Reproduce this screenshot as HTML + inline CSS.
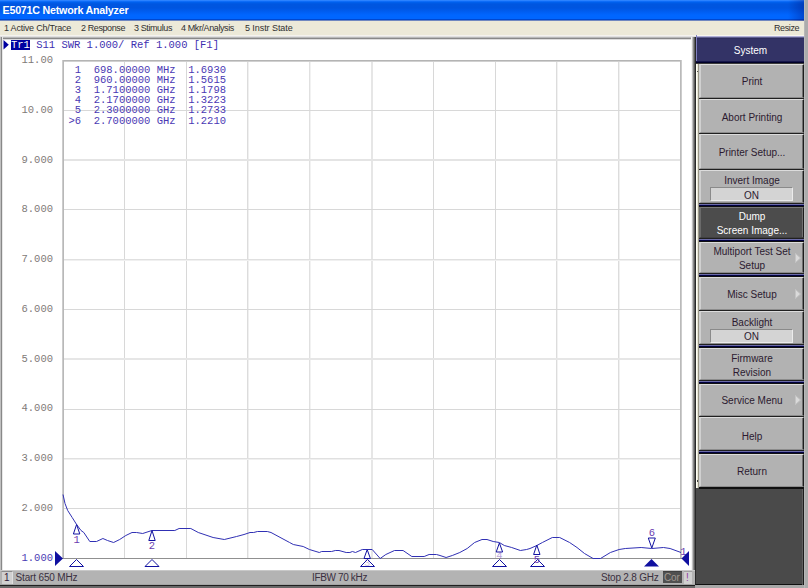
<!DOCTYPE html>
<html><head><meta charset="utf-8"><style>
*{margin:0;padding:0;box-sizing:border-box}
html,body{width:808px;height:588px;overflow:hidden;background:#a8a8a8;font-family:"Liberation Sans",sans-serif}
.abs{position:absolute}
#title{position:absolute;left:0;top:0;width:804px;height:21px;
 background:linear-gradient(to bottom,#3d8fff 0px,#1a75ff 1px,#0062f0 2px,#0056e0 4px,#0055e0 8px,#005cee 11px,#0066ff 15px,#0066ff 18.5px,#0048d0 19.5px,#7088c0 20.5px,#7088c0 21px)}
#title span{position:absolute;left:2.5px;top:4px;color:#fff;font-weight:bold;font-size:10.7px;letter-spacing:-0.22px}
#menu{position:absolute;left:0;top:21px;width:805px;height:14px;background:#ece9d8}
#menu span{position:absolute;top:2px;font-size:9px;color:#303030;letter-spacing:-0.4px;white-space:pre}
#strip{position:absolute;left:0;top:35px;width:696px;height:2px;background:linear-gradient(to bottom,#f5f3ee 0,#f5f3ee 1px,#e0e0e0 1px)}
#plotwin{position:absolute;left:0;top:37px;width:695px;height:533px;background:#fff}
#pwtop{position:absolute;left:0;top:37px;width:692px;height:3px;background:linear-gradient(to bottom,#b8b8b8 0,#b8b8b8 1px,#888 1px,#888 2px,#dcdcdc 2px)}
#pwleft{position:absolute;left:0;top:37px;width:3px;height:533px;background:linear-gradient(to right,#c0c0c0 0,#c0c0c0 1px,#888 1px,#888 2px,#e8e8e8 2px)}
#plotshade{position:absolute;left:691px;top:37px;width:4px;height:548px;background:linear-gradient(to right,#f4f4f4 0,#f4f4f4 1px,#c0c0c0 1px,#c0c0c0 2px,#8a8a8a 2px,#8a8a8a 3px,#5c5c5c 3px)}
.mono{font-family:"Liberation Mono",monospace;font-size:10.5px;white-space:pre}
#hdr{position:absolute;left:11px;top:39px;color:#4030b0;line-height:12px}
#hdr b{font-weight:normal;color:#fff}
.tr{position:absolute;left:68.5px;color:#4a38b4;line-height:12px}
.yl{position:absolute;left:0;width:53px;text-align:right;font-family:"Liberation Mono",monospace;font-size:10.5px;line-height:14px}
#status{position:absolute;left:0;top:570px;width:695px;height:15px;background:#b3b3b3}
#status span{position:absolute;top:2px;font-size:10px;color:#3a3040;white-space:pre}
#panel{position:absolute;left:695px;top:37px;width:109px;height:548px;background:#4a4a4a;border-left:1px solid #282828;border-right:1px solid #1c1c1c;border-bottom:1px solid #101010}
#panelr{position:absolute;left:802px;top:37px;width:1px;height:548px;background:#606060}
#sys{position:absolute;left:696px;top:35px;width:108px;height:26px;background:linear-gradient(to bottom,#f8f6ee 0,#f8f6ee 1px,#b0b0d8 1px,#b0b0d8 2px,#606090 2px,#606090 3px,#2e2e5e 3px,#2e2e5e 4px,#333366 4px);border-left:1px solid #8080c0;color:#fff;font-size:10px;text-align:center;line-height:31px}
#sysline{position:absolute;left:696px;top:61px;width:108px;height:3px;background:linear-gradient(to bottom,#15154a 0,#15154a 1px,#000028 1px,#000028 2px,#3a3a3a 2px)}
#vstrip{position:absolute;left:696px;top:64px;width:3px;height:424px;background:linear-gradient(to right,#fffff4 0,#fffff4 1px,#e8e6d8 1px,#e8e6d8 2px,#9a9888 2px)}
.key{position:absolute;left:699px;width:105px;background:#b2b2b2;border-top:1px solid #dcdcdc;border-left:2px solid #d0d0d0;border-right:1px solid #1c1c1c;border-bottom:1px solid #8c8c8c;box-shadow:inset -1px 0 0 #707070}
.key.dk{background:#4c4c4c;border-top:1px solid #787878;border-left:2px solid #6a6a6a;border-bottom:1px solid #404040}
.kl{position:absolute;left:0;right:0;text-align:center;font-size:10px;color:#2c1a30;line-height:14px;white-space:pre}
.dk .kl{color:#fff}
.onbox{position:absolute;left:9px;width:83px;top:17px;height:14px;background:#d4d4d4;border-top:1px solid #8a8a8a;border-left:1px solid #8a8a8a;border-bottom:1px solid #ececec;border-right:1px solid #ececec;text-align:center;font-size:10px;line-height:14px;color:#2c1a30}
.sep{position:absolute;left:699px;width:105px;height:4px;background:linear-gradient(to bottom,#202020 0,#202020 1px,#6a6aa8 1px,#6a6aa8 2px,#000040 2px,#000040 3px,#101010 3px)}
.arr{position:absolute;right:2px;top:50%;margin-top:-5px}
#keybg{position:absolute;left:699px;top:64px;width:105px;height:425px;background:#202020}
#keyline{position:absolute;left:699px;top:487px;width:105px;height:2px;background:#101010}
#rstrip{position:absolute;left:804px;top:0;width:4px;height:588px;background:#acacac;border-left:1px solid #b8b8b8}
#bot{position:absolute;left:0;top:585px;width:695px;height:3px;background:#686868;border-top:1px solid #202020}
</style></head><body>
<div id="title"><div style="position:absolute;right:0;top:0;width:16px;height:21px;background:linear-gradient(to right,rgba(0,0,100,0),rgba(0,0,100,0.3))"></div><span>E5071C Network Analyzer</span></div>
<div id="menu">
<span style="left:4px;letter-spacing:-0.21px">1 Active Ch/Trace</span><span style="left:81px">2 Response</span><span style="left:134px">3 Stimulus</span><span style="left:181px">4 Mkr/Analysis</span><span style="left:245px;letter-spacing:-0.07px">5 Instr State</span><span style="left:774px">Resize</span>
</div>
<div id="strip"></div>
<div id="plotwin"></div><div id="pwtop"></div><div id="pwleft"></div>
<div id="plotshade"></div>
<svg width="808" height="588" style="position:absolute;left:0;top:0" shape-rendering="auto"><rect x="124" y="61" width="1" height="497" fill="#d8d8d8"/><rect x="186" y="61" width="1" height="497" fill="#d8d8d8"/><rect x="247" y="61" width="1" height="497" fill="#dcdcdc"/><rect x="248" y="61" width="1" height="497" fill="#f0f0f0"/><rect x="309" y="61" width="1" height="497" fill="#e0e0e0"/><rect x="310" y="61" width="1" height="497" fill="#f2f2f2"/><rect x="371" y="61" width="1" height="497" fill="#e6e6e6"/><rect x="372" y="61" width="1" height="497" fill="#e6e6e6"/><rect x="433" y="61" width="1" height="497" fill="#d8d8d8"/><rect x="495" y="61" width="1" height="497" fill="#d8d8d8"/><rect x="556" y="61" width="1" height="497" fill="#dcdcdc"/><rect x="557" y="61" width="1" height="497" fill="#f2f2f2"/><rect x="618" y="61" width="1" height="497" fill="#dcdcdc"/><rect x="619" y="61" width="1" height="497" fill="#f0f0f0"/><rect x="64" y="110" width="617" height="1" fill="#d8d8d8"/><rect x="64" y="159" width="617" height="1" fill="#e4e4e4"/><rect x="64" y="160" width="617" height="1" fill="#e4e4e4"/><rect x="64" y="209" width="617" height="1" fill="#d8d8d8"/><rect x="64" y="259" width="617" height="1" fill="#e0e0e0"/><rect x="64" y="260" width="617" height="1" fill="#f0f0f0"/><rect x="64" y="309" width="617" height="1" fill="#d8d8d8"/><rect x="64" y="358" width="617" height="1" fill="#e6e6e6"/><rect x="64" y="359" width="617" height="1" fill="#e6e6e6"/><rect x="64" y="409" width="617" height="1" fill="#d8d8d8"/><rect x="64" y="458" width="617" height="1" fill="#e0e0e0"/><rect x="64" y="459" width="617" height="1" fill="#f0f0f0"/><rect x="64" y="508" width="617" height="1" fill="#d8d8d8"/><rect x="62" y="61" width="620" height="1" fill="#d0d0d0"/><rect x="62" y="60" width="620" height="1" fill="#b4b4b4"/><rect x="62" y="60" width="1" height="499" fill="#cccccc"/><rect x="63" y="60" width="1" height="499" fill="#b8b8b8"/><rect x="681" y="60" width="1" height="499" fill="#cccccc"/><rect x="680" y="60" width="1" height="499" fill="#bababa"/><rect x="62" y="558" width="620" height="1" fill="#909090"/><polyline points="63.0,494.5 65.0,503.5 67.7,510.5 72.2,517.5 76.6,524.5 81.0,530.5 83.8,532.5 89.8,541.5 96.5,541.5 102.9,538.5 107.5,540.5 113.6,542.5 119.7,539.5 125.8,535.5 132.0,532.5 136.6,532.5 142.7,533.5 151.9,530.5 155.0,530.5 174.8,530.5 179.1,528.5 190.8,528.5 198.3,532.5 213.1,537.5 224.3,539.5 236.6,536.5 244.0,534.5 250.0,532.5 253.7,532.5 257.4,531.5 267.3,531.5 271.0,532.5 289.6,542.5 293.3,544.5 303.2,546.5 309.4,549.5 319.3,552.5 321.7,551.5 331.6,551.5 335.3,550.5 339.0,550.5 346.2,552.5 349.9,552.5 352.4,551.5 355.5,552.5 362.3,549.5 367.2,549.5 372.2,549.5 380.2,558.5 385.8,554.5 394.5,550.5 403.1,550.5 411.8,556.5 424.2,556.5 429.1,554.5 436.5,554.5 440.0,555.5 446.1,557.5 452.3,555.5 459.8,552.5 467.2,548.5 474.6,542.5 482.0,539.5 487.0,539.5 493.2,541.5 499.4,542.5 504.3,545.5 511.7,547.5 520.4,550.5 526.6,549.5 530.0,548.5 536.8,545.5 542.4,542.5 552.3,537.5 559.7,537.5 569.6,542.5 577.0,547.5 584.5,553.5 593.1,558.5 600.5,558.5 610.4,552.5 619.1,549.5 625.3,548.5 641.2,547.5 651.8,548.5 663.5,547.5 670.1,548.5 681.0,552.5" fill="none" stroke="#3030b4" stroke-width="1"/><polygon points="76.6,524.5 73.39999999999999,534 79.8,534" fill="none" stroke="#1010a0" stroke-width="1"/><polygon points="152,530.5 148.8,540.5 155.2,540.5" fill="none" stroke="#1010a0" stroke-width="1"/><polygon points="367.2,549.6 364.0,558.5 370.4,558.5" fill="none" stroke="#1010a0" stroke-width="1"/><polygon points="499.4,543 496.2,552 502.59999999999997,552" fill="none" stroke="#1010a0" stroke-width="1"/><polygon points="536.8,545 533.5999999999999,554.5 540.0,554.5" fill="none" stroke="#1010a0" stroke-width="1"/><polygon points="651.8,548 648.3,538 655.3,538" fill="none" stroke="#1010a0" stroke-width="1"/><g font-family="Liberation Mono" font-size="10.5" fill="#6a3cb0"><text x="76.6" y="542.5" text-anchor="middle">1</text><text x="152" y="549" text-anchor="middle">2</text><text x="652" y="535.5" text-anchor="middle">6</text><text x="683.5" y="555" text-anchor="middle">1</text></g><polygon points="76.5,559.5 69.5,566.5 83.5,566.5" fill="white" stroke="#1010a0" stroke-width="1"/><polygon points="152,559.5 145,566.5 159,566.5" fill="white" stroke="#1010a0" stroke-width="1"/><polygon points="367.5,559.5 360.5,566.5 374.5,566.5" fill="white" stroke="#1010a0" stroke-width="1"/><polygon points="499.5,559.5 492.5,566.5 506.5,566.5" fill="white" stroke="#1010a0" stroke-width="1"/><polygon points="537.5,559.5 530.5,566.5 544.5,566.5" fill="white" stroke="#1010a0" stroke-width="1"/><polygon points="651.5,559 644.0,566.5 659.0,566.5" fill="#1010a0"/><g font-family="Liberation Mono" font-size="10.5" fill="#6a3cb0"><text x="367.2" y="566" text-anchor="middle" opacity="0.3">3</text><text x="499.4" y="558.5" text-anchor="middle" opacity="0.45">4</text><text x="536.8" y="563" text-anchor="middle" opacity="1">5</text></g><polygon points="55,551 63,558.5 55,566" fill="#1010a0"/><polygon points="689,551 681.5,558.5 689,566" fill="#1010a0"/></svg>
<svg width="9" height="11" style="position:absolute;left:3px;top:40px"><polygon points="0.5,0 5.8,4.7 0.5,9.4" fill="#0000a0"/></svg>
<div style="position:absolute;left:11px;top:40px;width:19px;height:10px;background:#0000a0"></div>
<div id="hdr" class="mono"><b>Tr1</b> S11 SWR 1.000/ Ref 1.000 [F1]</div>
<div class="tr mono" style="top:64px"> 1  698.00000 MHz  1.6930</div><div class="tr mono" style="top:74px"> 2  960.00000 MHz  1.5615</div><div class="tr mono" style="top:84px"> 3  1.7100000 GHz  1.1798</div><div class="tr mono" style="top:94px"> 4  2.1700000 GHz  1.3223</div><div class="tr mono" style="top:104px"> 5  2.3000000 GHz  1.2733</div><div class="tr mono" style="top:115px">>6  2.7000000 GHz  1.2210</div>
<div class="yl" style="top:53px;color:#7f7a78">11.00</div><div class="yl" style="top:103px;color:#7f7a78">10.00</div><div class="yl" style="top:153px;color:#7f7a78">9.000</div><div class="yl" style="top:202px;color:#7f7a78">8.000</div><div class="yl" style="top:252px;color:#7f7a78">7.000</div><div class="yl" style="top:302px;color:#7f7a78">6.000</div><div class="yl" style="top:352px;color:#7f7a78">5.000</div><div class="yl" style="top:401px;color:#7f7a78">4.000</div><div class="yl" style="top:451px;color:#7f7a78">3.000</div><div class="yl" style="top:501px;color:#7f7a78">2.000</div><div class="yl" style="top:551px;color:#4a3cb4">1.000</div>
<div id="status">
<div style="position:absolute;left:0;top:0;width:695px;height:1px;background:#c8c8c8"></div>
<div style="position:absolute;left:1px;top:1px;width:12px;height:13px;background:#d0d0d0;border-top:1px solid #8c8c8c;border-left:1px solid #b0b0b0;border-right:1px solid #e0e0e0"></div>
<span style="left:4px;color:#301838">1</span>
<span style="left:15.5px;letter-spacing:-0.15px">Start 650 MHz</span>
<span style="left:312px;letter-spacing:-0.35px">IFBW 70 kHz</span>
<span style="left:601px;letter-spacing:-0.2px">Stop 2.8 GHz</span>
<div style="position:absolute;left:663px;top:1px;width:19px;height:12px;background:#505050;border-top:1px solid #404040"></div>
<span style="left:664px;color:#a09890;letter-spacing:-0.2px">Cor</span>
<div style="position:absolute;left:684px;top:1px;width:8px;height:13px;background:#d0d0d0;border-top:1px solid #a0a0a0"></div>
<span style="left:686px;color:#9040a0">!</span>
<div style="position:absolute;left:0;top:14px;width:695px;height:1px;background:#a4a4a4"></div>
</div>
<div id="bot"></div>
<div id="panel"></div><div id="panelr"></div>
<div id="sys">System</div>
<div id="sysline"></div>
<div id="vstrip"></div>
<div id="keybg"></div>
<div style="position:absolute;left:697px;top:71px;width:1px;height:1px;background:#505050"></div><div style="position:absolute;left:697px;top:480px;width:1px;height:2px;background:#404040"></div>
<div class="key" style="top:64px;height:34px"><div class="kl" style="top:10px">Print</div></div><div class="key" style="top:99px;height:34px"><div class="kl" style="top:11px">Abort Printing</div></div><div class="key" style="top:134px;height:35px"><div class="kl" style="top:11px">Printer Setup...</div></div><div class="key" style="top:170px;height:33px"><div class="kl" style="top:3px">Invert Image</div><div class="onbox" style="top:16px;line-height:15px">ON</div></div><div class="key dk" style="top:207px;height:31px"><div class="kl" style="top:2px">Dump</div><div class="kl" style="top:16px">Screen Image...</div></div><div class="key" style="top:242px;height:31px"><div class="kl" style="top:2px">Multiport Test Set</div><div class="kl" style="top:16px">Setup</div><svg class="arr" width="6" height="10"><polygon points="0.5,0.5 5.5,5 0.5,9.5" fill="#dadada" stroke="#c4c4c4" stroke-width="1"/></svg></div><div class="key" style="top:277px;height:33px"><div class="kl" style="top:10px">Misc Setup</div><svg class="arr" width="6" height="10"><polygon points="0.5,0.5 5.5,5 0.5,9.5" fill="#dadada" stroke="#c4c4c4" stroke-width="1"/></svg></div><div class="key" style="top:311px;height:33px"><div class="kl" style="top:4px">Backlight</div><div class="onbox" style="top:17px;line-height:14px">ON</div></div><div class="key" style="top:348px;height:32px"><div class="kl" style="top:3px">Firmware</div><div class="kl" style="top:17px">Revision</div></div><div class="key" style="top:384px;height:32px"><div class="kl" style="top:9px">Service Menu</div><svg class="arr" width="6" height="10"><polygon points="0.5,0.5 5.5,5 0.5,9.5" fill="#dadada" stroke="#c4c4c4" stroke-width="1"/></svg></div><div class="key" style="top:417px;height:33px"><div class="kl" style="top:12px">Help</div></div><div class="key" style="top:454px;height:33px"><div class="kl" style="top:10px">Return</div></div><div class="sep" style="top:203px"></div><div class="sep" style="top:238px"></div><div class="sep" style="top:273px"></div><div class="sep" style="top:344px"></div><div class="sep" style="top:380px"></div><div class="sep" style="top:450px"></div>
<div id="keyline"></div>
<div id="rstrip"></div>
</body></html>
